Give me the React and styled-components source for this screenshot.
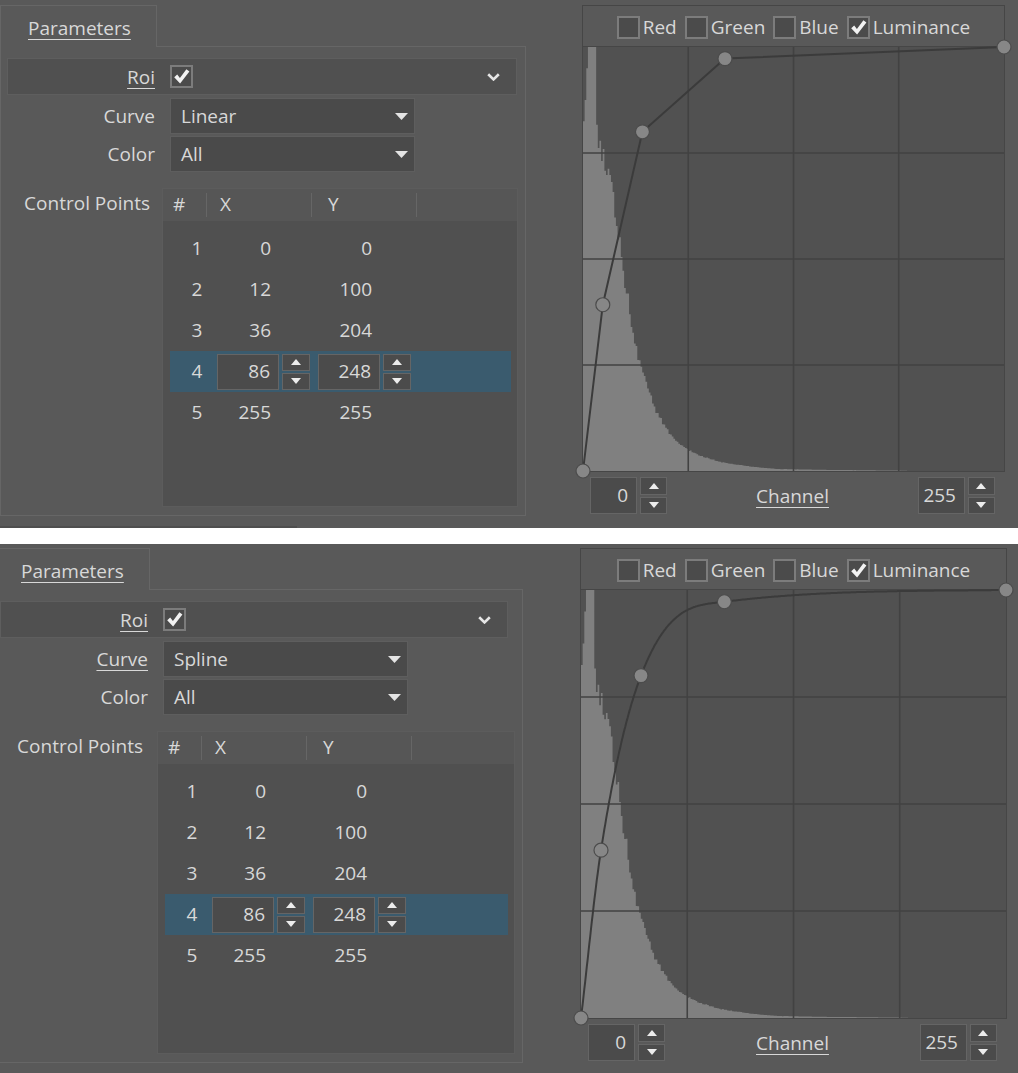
import React from 'react';
import styled, { createGlobalStyle } from 'styled-components';

const FONT = `"Open Sans", "Noto Sans", "Liberation Sans", sans-serif`;

const GlobalStyle = createGlobalStyle`
  html, body { margin: 0; padding: 0; background: #ffffff; }
  body { font-family: ${FONT}; }
  * { box-sizing: border-box; }
`;

const TEXT = '#d8d8d8';
const BORDER = '#666666';

const Page = styled.div`
  width: 1018px;
  display: flex;
  flex-direction: column;
  gap: 16px;
  font-family: ${FONT};
  font-size: 19px;
  color: ${TEXT};
`;

const Panel = styled.section`
  height: ${(p) => p.$h}px;
  background: #595959;
  display: flex;
  align-items: flex-start;
  overflow: hidden;
`;

const LeftPane = styled.div`
  flex: none;
  width: ${(p) => p.$w}px;
  margin-left: ${(p) => p.$shift}px;
  display: flex;
  flex-direction: column;
`;

const TabBar = styled.div`
  display: flex;
  padding-top: ${(p) => p.$top}px;
`;

const Tab = styled.div`
  width: ${(p) => p.$w}px;
  height: 42px;
  border: 1px solid ${BORDER};
  border-bottom: none;
  display: flex;
  align-items: center;
  padding-left: 27px;
  padding-top: 2px;
`;

const Underlined = styled.span`
  text-decoration: underline;
  text-underline-offset: 4px;
  text-decoration-thickness: 1px;
`;

const TabFill = styled.div`
  flex: 1;
  height: 42px;
  border-bottom: 1px solid ${BORDER};
`;

const Frame = styled.div`
  height: ${(p) => p.$h}px;
  border: 1px solid ${BORDER};
  border-top: none;
  padding-top: 11px;
  display: flex;
  flex-direction: column;
`;

const RoiBand = styled.div`
  height: 37px;
  margin: 0 ${(p) => p.$right}px 0 6px;
  background: #505050;
  border: 1px solid #5e5e5e;
  display: flex;
  align-items: center;
`;

const RoiLabel = styled.div`
  width: 147px;
  text-align: right;
`;

const CheckBox = styled.span`
  flex: none;
  width: 23px;
  height: 23px;
  border: 2px solid #7c7c7c;
  background: #4b4b4b;
  display: inline-flex;
  align-items: center;
  justify-content: center;
  margin-left: ${(p) => p.$ml || 0}px;
`;

const Chevron = styled.svg`
  margin-left: auto;
  margin-right: 16px;
`;

const FormGrid = styled.div`
  flex: 1;
  display: grid;
  grid-template-columns: 161px 1fr;
  grid-template-rows: 36px 36px 1fr;
  row-gap: 2px;
  margin-top: 3px;
  padding-bottom: 8px;
`;

const FieldLabel = styled.div`
  align-self: center;
  text-align: right;
  padding-right: 7px;
`;

const SelectBox = styled.div`
  width: 245px;
  height: 36px;
  margin-left: 8px;
  background: #4a4a4a;
  border: 1px solid #5e5e5e;
  display: flex;
  align-items: center;
  justify-content: space-between;
  padding: 0 6px 0 10px;
`;

const ControlLabel = styled.div`
  align-self: start;
  margin-top: 14px;
  height: 32px;
  line-height: 30px;
  text-align: right;
  padding-right: 12px;
`;

const Table = styled.div`
  margin: 14px 7px 0 ${(p) => p.$shift}px;
  border: 1px solid #5c5c5c;
  background: #505050;
  display: flex;
  flex-direction: column;
  min-height: 0;
`;

const HeaderRow = styled.div`
  height: 32px;
  flex: none;
  display: flex;
  align-items: center;
  background: #565656;
`;

const HeadCell = styled.div`
  width: ${(p) => p.$w}px;
  padding-left: ${(p) => p.$pl}px;
  padding-bottom: 2px;
`;

const HeadDivider = styled.div`
  width: 1px;
  height: 24px;
  background: #666666;
`;

const TableBody = styled.div`
  flex: 1;
  padding: 7px 6px 0 7px;
`;

const Row = styled.div`
  height: 41px;
  display: flex;
  align-items: center;
  background: ${(p) => (p.$selected ? '#3a5b6e' : 'transparent')};
`;

const NumCell = styled.div`
  width: 47px;
  padding-left: 7px;
  padding-bottom: 2px;
  text-align: center;
`;

const ValueCell = styled.div`
  width: 94px;
  margin-left: ${(p) => p.$ml || 0}px;
  display: flex;
`;

const ValueText = styled.div`
  width: 62px;
  text-align: right;
  padding-right: 8px;
  padding-bottom: 2px;
`;

const Spin = styled.div`
  display: flex;
  gap: 3px;
  height: ${(p) => p.$h}px;
`;

const SpinInput = styled.div`
  flex: none;
  width: ${(p) => p.$w}px;
  height: 100%;
  background: #4b4b4b;
  border: 1px solid #656565;
  display: flex;
  align-items: center;
  justify-content: flex-end;
  padding: 0 8px 1px 0;
`;

const SpinArrows = styled.div`
  flex: none;
  width: ${(p) => p.$w}px;
  display: flex;
  flex-direction: column;
  gap: 2px;
`;

const SpinButton = styled.div`
  flex: 1;
  background: #4b4b4b;
  border: 1px solid #656565;
  display: flex;
  align-items: center;
  justify-content: center;
`;

const ChartPane = styled.div`
  flex: none;
  width: ${(p) => p.$w}px;
  margin-left: ${(p) => p.$gap}px;
  margin-top: ${(p) => p.$top}px;
  display: flex;
  flex-direction: column;
`;

const ChartFrame = styled.div`
  border: 1px solid #464646;
`;

const ChannelBar = styled.div`
  height: 41px;
  border-bottom: 1px solid #464646;
  display: flex;
  align-items: center;
  justify-content: center;
  gap: 8px;
  padding-top: 3px;
`;

const ChannelItem = styled.label`
  display: flex;
  align-items: center;
  gap: 3px;
`;

const ChannelText = styled.span`
  padding-bottom: 1px;
`;

const Plot = styled.div`
  height: ${(p) => p.$h}px;
  background: #515151;
`;

const PlotSvg = styled.svg`
  display: block;
  overflow: visible;
`;

const RangeBar = styled.div`
  display: flex;
  align-items: center;
  justify-content: space-between;
  padding: 5px 10px 0 8px;
`;

const ChannelLabel = styled.div`
  padding-top: 1px;
`;

const Strip = styled.div`
  width: 297px;
  height: 3px;
  margin-top: 10px;
  background: #4e4e4e;
`;

/* ---------- icons ---------- */
const Check = () => (
  <svg width="19" height="19" viewBox="0 0 19 19">
    <path d="M2.2 10.2 L5.2 7.6 L7.9 11 L14.4 2.2 L17.4 4.6 L8.1 16.6 Z" fill="#f2f2f2" />
  </svg>
);

const DropTri = () => (
  <svg width="13" height="7" viewBox="0 0 13 7">
    <polygon points="0,0 13,0 6.5,7" fill="#e4e4e4" />
  </svg>
);

const Arrow = ({ up }) => (
  <svg width="10" height="6" viewBox="0 0 10 6">
    <polygon points={up ? '0,6 10,6 5,0' : '0,0 10,0 5,6'} fill="#ececec" />
  </svg>
);

/* ---------- data ---------- */
const POINTS = [
  [0, 0],
  [12, 100],
  [36, 204],
  [86, 248],
  [255, 255],
];

const HIST_KEYS = [
  [0, 0.8], [2, 0.9], [3, 1], [8, 1], [8.6, 0.78], [13, 0.72], [17, 0.67], [19.4, 0.61],
  [22.4, 0.53], [25.4, 0.45], [28.5, 0.375], [31.5, 0.305], [35, 0.245], [39, 0.195],
  [45, 0.135], [51.5, 0.095], [59, 0.06], [71.5, 0.036], [83.6, 0.021], [104, 0.0095],
  [118, 0.0047], [150, 0.0025], [190, 0.0012], [200, 0], [256, 0],
];

function histAt(v) {
  for (let k = 0; k < HIST_KEYS.length - 1; k++) {
    const [a, ha] = HIST_KEYS[k];
    const [b, hb] = HIST_KEYS[k + 1];
    if (v >= a && v <= b) return ha + ((hb - ha) * (v - a)) / (b - a);
  }
  return 0;
}

function noise(v) {
  const s = Math.sin(v * 91.73 + 3.1) * 43758.5453;
  return s - Math.floor(s);
}

function histogramPath(w, h) {
  const bw = w / 256;
  let d = `M0 ${h}`;
  for (let v = 0; v < 256; v++) {
    let f = histAt(v + 0.5);
    if (v > 8) f *= 0.95 + 0.1 * noise(v);
    f = Math.min(1, f);
    const y = (h - f * h).toFixed(1);
    d += ` L${(v * bw).toFixed(2)} ${y} L${((v + 1) * bw).toFixed(2)} ${y}`;
  }
  d += ` L${w} ${h} Z`;
  return d;
}

function monotone(pts) {
  const n = pts.length;
  const xs = pts.map((p) => p[0]);
  const ys = pts.map((p) => p[1]);
  const d = [];
  const m = [];
  for (let i = 0; i < n - 1; i++) d.push((ys[i + 1] - ys[i]) / (xs[i + 1] - xs[i]));
  m[0] = d[0];
  m[n - 1] = d[n - 2];
  for (let i = 1; i < n - 1; i++) m[i] = d[i - 1] * d[i] <= 0 ? 0 : (d[i - 1] + d[i]) / 2;
  for (let i = 0; i < n - 1; i++) {
    if (d[i] === 0) {
      m[i] = 0;
      m[i + 1] = 0;
      continue;
    }
    const a = m[i] / d[i];
    const b = m[i + 1] / d[i];
    const s = a * a + b * b;
    if (s > 9) {
      const t = 3 / Math.sqrt(s);
      m[i] = t * a * d[i];
      m[i + 1] = t * b * d[i];
    }
  }
  return (x) => {
    let i = 0;
    while (i < n - 2 && x > xs[i + 1]) i++;
    const hh = xs[i + 1] - xs[i];
    const t = (x - xs[i]) / hh;
    const t2 = t * t;
    const t3 = t2 * t;
    return (
      (2 * t3 - 3 * t2 + 1) * ys[i] +
      (t3 - 2 * t2 + t) * hh * m[i] +
      (-2 * t3 + 3 * t2) * ys[i + 1] +
      (t3 - t2) * hh * m[i + 1]
    );
  };
}

function curvePath(kind, w, h) {
  const px = (v) => (v / 255) * w;
  const py = (v) => h - (v / 255) * h;
  if (kind === 'Linear') {
    return POINTS.map((p, i) => `${i ? 'L' : 'M'}${px(p[0]).toFixed(1)} ${py(p[1]).toFixed(1)}`).join(' ');
  }
  const f = monotone(POINTS);
  let d = '';
  for (let x = 0; x <= 255; x += 0.5) {
    d += `${x ? ' L' : 'M'}${px(x).toFixed(1)} ${py(f(x)).toFixed(1)}`;
  }
  return d;
}

/* ---------- components ---------- */
function SpinBox({ value, inputW, arrowW, height }) {
  return (
    <Spin $h={height}>
      <SpinInput $w={inputW}>{value}</SpinInput>
      <SpinArrows $w={arrowW}>
        <SpinButton>
          <Arrow up />
        </SpinButton>
        <SpinButton>
          <Arrow />
        </SpinButton>
      </SpinArrows>
    </Spin>
  );
}

function CurveChart({ w, h, kind }) {
  const px = (v) => (v / 255) * w;
  const py = (v) => h - (v / 255) * h;
  const grid = [1, 2, 3];
  return (
    <PlotSvg width={w} height={h} viewBox={`0 0 ${w} ${h}`}>
      <path d={histogramPath(w, h)} fill="#808080" />
      {grid.map((k) => (
        <line key={`v${k}`} x1={(w * k) / 4} x2={(w * k) / 4} y1={0} y2={h} stroke="#424242" strokeWidth="1.6" />
      ))}
      {grid.map((k) => (
        <line key={`h${k}`} x1={0} x2={w} y1={(h * k) / 4} y2={(h * k) / 4} stroke="#424242" strokeWidth="1.6" />
      ))}
      <path d={curvePath(kind, w, h)} fill="none" stroke="#3b3b3b" strokeWidth="2" />
      {POINTS.map((p, i) => (
        <circle key={i} cx={px(p[0])} cy={py(p[1])} r="7" fill="#878787" stroke="#4c4c4c" strokeWidth="1.2" />
      ))}
    </PlotSvg>
  );
}

const ROWS = [
  { n: 1, x: 0, y: 0 },
  { n: 2, x: 12, y: 100 },
  { n: 3, x: 36, y: 204 },
  { n: 4, x: 86, y: 248, edit: true },
  { n: 5, x: 255, y: 255 },
];

function ParamPanel({ cfg }) {
  return (
    <Panel $h={cfg.height}>
      <LeftPane $w={cfg.paneW} $shift={cfg.shift}>
        <TabBar $top={cfg.tabTop}>
          <Tab $w={cfg.tabW}>
            <Underlined>Parameters</Underlined>
          </Tab>
          <TabFill />
        </TabBar>
        <Frame $h={cfg.frameH}>
          <RoiBand $right={cfg.bandRight}>
            <RoiLabel>
              <Underlined>Roi</Underlined>
            </RoiLabel>
            <CheckBox $ml={15}>
              <Check />
            </CheckBox>
            <Chevron width="13" height="8" viewBox="0 0 13 8">
              <polyline points="1.2,1.2 6.5,6.4 11.8,1.2" fill="none" stroke="#e6e6e6" strokeWidth="2.6" />
            </Chevron>
          </RoiBand>
          <FormGrid>
            <FieldLabel>{cfg.curveFocus ? <Underlined>Curve</Underlined> : 'Curve'}</FieldLabel>
            <SelectBox>
              <span>{cfg.curve}</span>
              <DropTri />
            </SelectBox>
            <FieldLabel>Color</FieldLabel>
            <SelectBox>
              <span>All</span>
              <DropTri />
            </SelectBox>
            <ControlLabel>Control Points</ControlLabel>
            <Table $shift={cfg.tableShift}>
              <HeaderRow>
                <HeadCell $w={43} $pl={10}>#</HeadCell>
                <HeadDivider />
                <HeadCell $w={104} $pl={13}>X</HeadCell>
                <HeadDivider />
                <HeadCell $w={104} $pl={16}>Y</HeadCell>
                <HeadDivider />
              </HeaderRow>
              <TableBody>
                {ROWS.map((r) => (
                  <Row key={r.n} $selected={r.edit}>
                    <NumCell>{r.n}</NumCell>
                    <ValueCell>
                      {r.edit ? (
                        <SpinBox value={r.x} inputW={62} arrowW={28} height={36} />
                      ) : (
                        <ValueText>{r.x}</ValueText>
                      )}
                    </ValueCell>
                    <ValueCell $ml={7}>
                      {r.edit ? (
                        <SpinBox value={r.y} inputW={62} arrowW={28} height={36} />
                      ) : (
                        <ValueText>{r.y}</ValueText>
                      )}
                    </ValueCell>
                  </Row>
                ))}
              </TableBody>
            </Table>
          </FormGrid>
        </Frame>
        {cfg.strip && <Strip />}
      </LeftPane>
      <ChartPane $w={cfg.plotW + 2} $gap={cfg.chartGap} $top={cfg.chartTop}>
        <ChartFrame>
          <ChannelBar>
            {['Red', 'Green', 'Blue', 'Luminance'].map((c) => (
              <ChannelItem key={c}>
                <CheckBox>{c === 'Luminance' && <Check />}</CheckBox>
                <ChannelText>{c}</ChannelText>
              </ChannelItem>
            ))}
          </ChannelBar>
          <Plot $h={cfg.plotH}>
            <CurveChart w={cfg.plotW} h={cfg.plotH} kind={cfg.curve} />
          </Plot>
        </ChartFrame>
        <RangeBar>
          <SpinBox value={0} inputW={47} arrowW={27} height={37} />
          <ChannelLabel>
            <Underlined>Channel</Underlined>
          </ChannelLabel>
          <SpinBox value={255} inputW={47} arrowW={27} height={37} />
        </RangeBar>
      </ChartPane>
    </Panel>
  );
}

const TOP = {
  height: 528, shift: 0, paneW: 526, tabTop: 5, tabW: 157, frameH: 469, bandRight: 8, tableShift: 0,
  chartGap: 56, chartTop: 5, plotW: 421, plotH: 424, curve: 'Linear', curveFocus: false, strip: true,
};

const BOTTOM = {
  height: 529, shift: -7, paneW: 530, tabTop: 4, tabW: 157, frameH: 473, bandRight: 14, tableShift: 2,
  chartGap: 57, chartTop: 4, plotW: 425, plotH: 428, curve: 'Spline', curveFocus: true, strip: false,
};

export default function App() {
  return (
    <>
      <GlobalStyle />
      <Page>
        <ParamPanel cfg={TOP} />
        <ParamPanel cfg={BOTTOM} />
      </Page>
    </>
  );
}
